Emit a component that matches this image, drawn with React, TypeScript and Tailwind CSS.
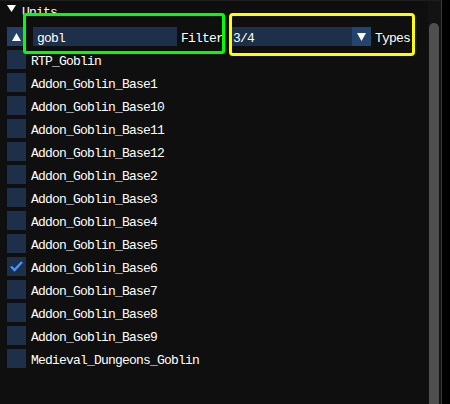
import React from "react";

const units = [
  { name: "RTP_Goblin", on: false },
  { name: "Addon_Goblin_Base1", on: false },
  { name: "Addon_Goblin_Base10", on: false },
  { name: "Addon_Goblin_Base11", on: false },
  { name: "Addon_Goblin_Base12", on: false },
  { name: "Addon_Goblin_Base2", on: false },
  { name: "Addon_Goblin_Base3", on: false },
  { name: "Addon_Goblin_Base4", on: false },
  { name: "Addon_Goblin_Base5", on: false },
  { name: "Addon_Goblin_Base6", on: true },
  { name: "Addon_Goblin_Base7", on: false },
  { name: "Addon_Goblin_Base8", on: false },
  { name: "Addon_Goblin_Base9", on: false },
  { name: "Medieval_Dungeons_Goblin", on: false },
];

const Label = ({ children, className = "" }: { children: React.ReactNode; className?: string }) => (
  <span className={`block h-[19px] leading-[19px] pt-[2px] whitespace-pre ${className}`}>{children}</span>
);

const Checkbox = ({ on }: { on: boolean }) => (
  <div className="w-[19px] h-[19px] shrink-0 bg-[#1d2f49] flex items-center justify-center">
    {on && (
      <svg width="19" height="19" viewBox="0 0 19 19">
        <polyline points="4,9.5 7.5,13 15,5" fill="none" stroke="#4296fa" strokeWidth="2.4" />
      </svg>
    )}
  </div>
);

const App = () => {
  return (
    <div
      className="w-[450px] h-[404px] bg-black flex overflow-hidden text-white text-[13px] tracking-[-0.8px]"
      style={{ fontFamily: '"Liberation Mono", "DejaVu Sans Mono", monospace' }}
    >
      <div className="w-[442px] h-full bg-[#0f0f0f] border-t border-t-[#1c1c1c] border-r border-r-[#3c3c3c] flex relative">
        {/* content */}
        <div className="flex-1 pl-[7px] flex flex-col">
          {/* tree node header */}
          <div className="h-[19px] flex items-start">
            <svg width="15" height="19" viewBox="0 0 15 19" className="shrink-0">
              <polygon points="0,4 9,4 4.5,11" fill="#ffffff" />
            </svg>
            <Label>Units</Label>
          </div>

          {/* toolbar */}
          <div className="mt-[7px] h-[19px] flex items-start">
            <div className="w-[19px] h-[19px] bg-[#233f63] flex items-center justify-center shrink-0">
              <svg width="9" height="8" viewBox="0 0 9 8">
                <polygon points="4.5,0 9,8 0,8" fill="#ffffff" />
              </svg>
            </div>
            <div className="ml-[7px] w-[144px] h-[19px] bg-[#1d2f49] pl-[4px] shrink-0">
              <Label>gobl</Label>
            </div>
            <Label className="ml-[4px]">Filter</Label>
            <div className="ml-[8px] w-[140px] h-[19px] flex shrink-0">
              <div className="flex-1 bg-[#1d2f49] pl-[2px]">
                <Label>3/4</Label>
              </div>
              <div className="w-[19px] h-[19px] bg-[#23456d] flex items-center justify-center">
                <svg width="9" height="8" viewBox="0 0 9 8">
                  <polygon points="0,0 9,0 4.5,8" fill="#ffffff" />
                </svg>
              </div>
            </div>
            <Label className="ml-[4px]">Types</Label>
          </div>

          {/* unit list */}
          <div className="mt-[4px] flex flex-col gap-[4px]">
            {units.map((u) => (
              <div key={u.name} className="h-[19px] flex items-start">
                <Checkbox on={u.on} />
                <Label className="ml-[5px]">{u.name}</Label>
              </div>
            ))}
          </div>
        </div>

        {/* scrollbar */}
        <div className="w-[13px] h-full bg-[#131313] pt-[22px] pl-[1px] flex flex-col">
          <div className="w-[10px] flex-1 bg-[#4f4f4f] rounded-t-[5px]" />
        </div>

        {/* annotation boxes */}
        <div className="absolute left-[23px] top-[12px] w-[202px] h-[41px] border-[3px] border-[#00ff00] rounded-[3px]" />
        <div className="absolute left-[229px] top-[12px] w-[186px] h-[43px] border-[3px] border-[#ffff00] rounded-[4px]" />
      </div>
    </div>
  );
};

export default App;
